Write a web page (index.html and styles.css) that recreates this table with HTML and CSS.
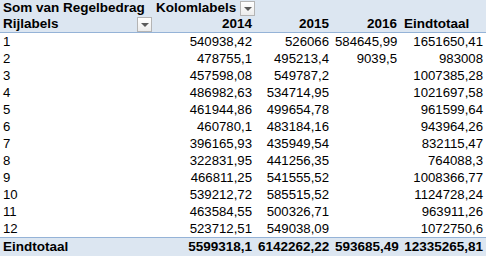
FILE: index.html
```html
<!DOCTYPE html>
<html>
<head>
<meta charset="utf-8">
<link rel="stylesheet" href="styles.css">
</head>
<body>
<table class="pivot">
  <colgroup>
    <col class="c-a"><col class="c-b"><col class="c-c"><col class="c-d"><col class="c-e">
  </colgroup>
  <thead>
    <tr class="hdr1">
      <th class="lbl">Som van Regelbedrag</th>
      <th class="lbl"><span class="withdd">Kolomlabels<span class="dd"></span></span></th>
      <th></th><th></th><th></th>
    </tr>
    <tr class="hdr2">
      <th class="lbl"><span class="withdd full">Rijlabels<span class="dd"></span></span></th>
      <th class="num">2014</th>
      <th class="num">2015</th>
      <th class="num">2016</th>
      <th class="lbl">Eindtotaal</th>
    </tr>
  </thead>
  <tbody>
    <tr><td class="lbl">1</td><td class="num">540938,42</td><td class="num">526066</td><td class="num">584645,99</td><td class="num">1651650,41</td></tr>
    <tr><td class="lbl">2</td><td class="num">478755,1</td><td class="num">495213,4</td><td class="num">9039,5</td><td class="num">983008</td></tr>
    <tr><td class="lbl">3</td><td class="num">457598,08</td><td class="num">549787,2</td><td class="num"></td><td class="num">1007385,28</td></tr>
    <tr><td class="lbl">4</td><td class="num">486982,63</td><td class="num">534714,95</td><td class="num"></td><td class="num">1021697,58</td></tr>
    <tr><td class="lbl">5</td><td class="num">461944,86</td><td class="num">499654,78</td><td class="num"></td><td class="num">961599,64</td></tr>
    <tr><td class="lbl">6</td><td class="num">460780,1</td><td class="num">483184,16</td><td class="num"></td><td class="num">943964,26</td></tr>
    <tr><td class="lbl">7</td><td class="num">396165,93</td><td class="num">435949,54</td><td class="num"></td><td class="num">832115,47</td></tr>
    <tr><td class="lbl">8</td><td class="num">322831,95</td><td class="num">441256,35</td><td class="num"></td><td class="num">764088,3</td></tr>
    <tr><td class="lbl">9</td><td class="num">466811,25</td><td class="num">541555,52</td><td class="num"></td><td class="num">1008366,77</td></tr>
    <tr><td class="lbl">10</td><td class="num">539212,72</td><td class="num">585515,52</td><td class="num"></td><td class="num">1124728,24</td></tr>
    <tr><td class="lbl">11</td><td class="num">463584,55</td><td class="num">500326,71</td><td class="num"></td><td class="num">963911,26</td></tr>
    <tr><td class="lbl">12</td><td class="num">523712,51</td><td class="num">549038,09</td><td class="num"></td><td class="num">1072750,6</td></tr>
  </tbody>
  <tfoot>
    <tr class="total">
      <td class="lbl">Eindtotaal</td>
      <td class="num">5599318,1</td>
      <td class="num">6142262,22</td>
      <td class="num">593685,49</td>
      <td class="num">12335265,81</td>
    </tr>
  </tfoot>
</table>
</body>
</html>
```
FILE: styles.css
```css
html, body {
  margin: 0;
  padding: 0;
  background: #ffffff;
}

.pivot {
  table-layout: fixed;
  border-collapse: separate;
  border-spacing: 0;
  width: 486px;
  font-family: "Liberation Sans", Arial, sans-serif;
  font-size: 13.2px;
  color: #000000;
}

.c-a { width: 153px; }
.c-b { width: 102px; }
.c-c { width: 77px; }
.c-d { width: 68px; }
.c-e { width: 86px; }

.pivot th,
.pivot td {
  padding: 0 3px 0 3px;
  white-space: nowrap;
  overflow: hidden;
  line-height: 17px;
  height: 17px;
  box-sizing: border-box;
}

.pivot th {
  font-weight: bold;
  font-size: 13.5px;
  background: #dce6f1;
  height: 16px;
  line-height: 16px;
}

.hdr2 th {
  border-bottom: 1px solid #95b3d7;
  height: 17px;
}

.lbl { text-align: left; }
.num { text-align: right; }

.hdr2 th.lbl:last-child { padding-left: 4px; }

.withdd {
  display: flex;
  align-items: center;
  gap: 4px;
}

.withdd.full {
  justify-content: space-between;
  margin-right: -2px;
}

.dd {
  display: inline-block;
  width: 13px;
  height: 13px;
  border: 1px solid #b4b4b4;
  background: linear-gradient(#ffffff, #ececec);
  position: relative;
  flex: none;
}

.dd::after {
  content: "";
  position: absolute;
  left: 3px;
  top: 5px;
  border-left: 4px solid transparent;
  border-right: 4px solid transparent;
  border-top: 4px solid #5a5a5a;
}

.total td {
  font-weight: bold;
  font-size: 13.5px;
  background: #dce6f1;
  border-top: 1px solid #95b3d7;
  height: 19px;
  line-height: 18px;
}
```
